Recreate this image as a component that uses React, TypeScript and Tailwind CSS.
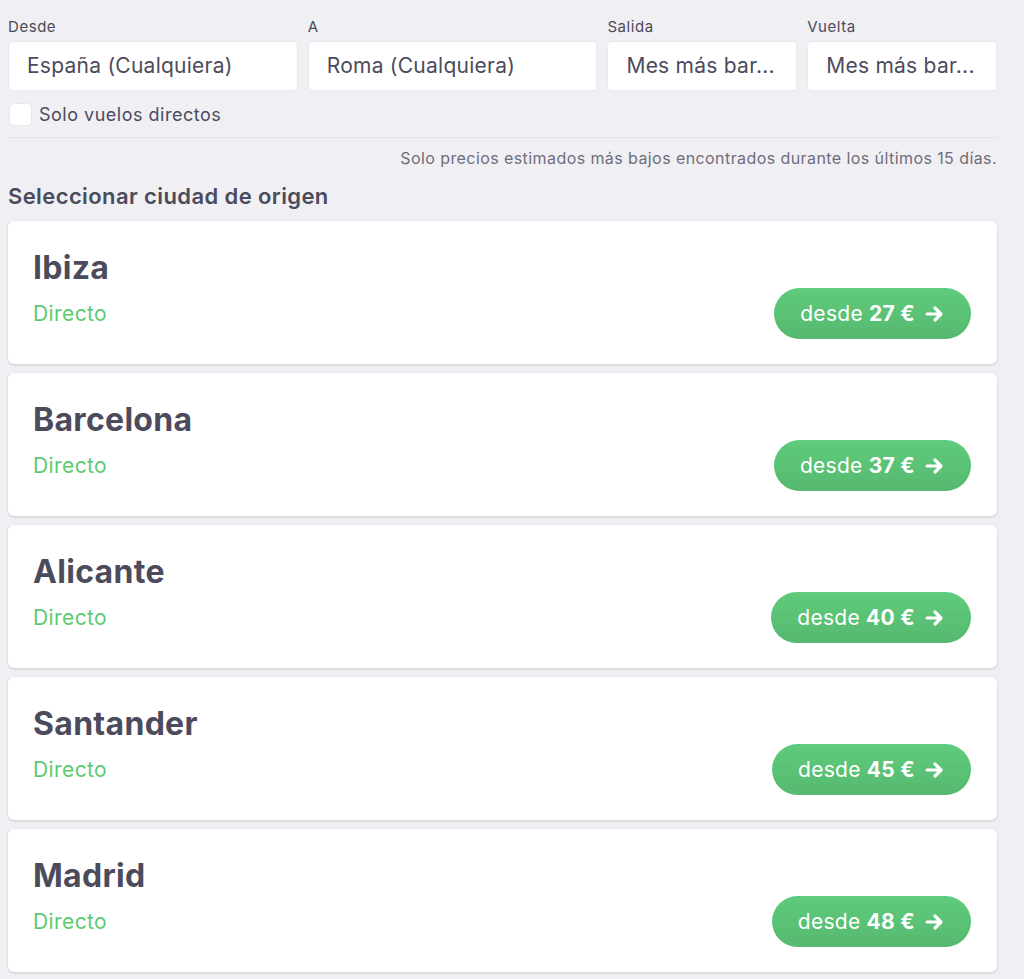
import React from "react";

const cities = [
  { name: "Ibiza", price: 27 },
  { name: "Barcelona", price: 37 },
  { name: "Alicante", price: 40 },
  { name: "Santander", price: 45 },
  { name: "Madrid", price: 48 },
];

function Arrow() {
  return (
    <svg width="20" height="18" viewBox="0 0 20 18" fill="none" className="ml-[10px]">
      <path d="M2 9h14M10 3l6 6-6 6" stroke="white" strokeWidth="3.2" strokeLinecap="round" strokeLinejoin="round" />
    </svg>
  );
}

function Field({ label, value, w }: { label: string; value: string; w: string }) {
  return (
    <div className={`flex flex-col ${w}`}>
      <div className="text-[15px] tracking-[0.55px] leading-[18px] text-[#4a4a58] mb-[5px]">{label}</div>
      <div className="h-[50px] bg-white rounded-[4px] border border-[#e8e8ee] flex items-center pl-[18px] text-[21px] tracking-[0.25px] text-[#4b4b5c] whitespace-nowrap overflow-hidden">
        {value}
      </div>
    </div>
  );
}

export default function App() {
  return (
    <div
      className="min-h-[979px] bg-[#f0f0f4] pl-[8px] pr-[27px] pt-[18px]"
      style={{ fontFamily: "Inter, 'Noto Sans', sans-serif" }}
    >
      <div className="flex gap-[10px]">
        <Field label="Desde" value="España (Cualquiera)" w="w-[290px]" />
        <Field label="A" value="Roma (Cualquiera)" w="w-[290px]" />
        <Field label="Salida" value="Mes más bar..." w="w-[190px]" />
        <Field label="Vuelta" value="Mes más bar..." w="w-[190px]" />
      </div>
      <div className="flex items-center mt-[11px] h-[24px]">
        <div className="w-[23px] h-[23px] bg-white rounded-[5px] border border-[#e6e6ec] ml-[1px]" />
        <span className="ml-[7px] text-[18px] tracking-[0.5px] text-[#4b4b5c]">Solo vuelos directos</span>
      </div>
      <div className="h-px bg-[#e2e2e8] mt-[11px]" />
      <div className="text-right text-[16px] tracking-[0.42px] text-[#6e6e7a] mt-[11px] leading-[18px]">
        Solo precios estimados más bajos encontrados durante los últimos 15 días.
      </div>
      <div className="text-[22px] font-semibold tracking-[0.4px] text-[#4b4b5c] mt-[17px] leading-[24px]">
        Seleccionar ciudad de origen
      </div>
      <div className="flex flex-col gap-[9px] mt-[13px]">
        {cities.map((c) => (
          <div
            key={c.name}
            className="bg-white rounded-[6px] shadow-[0_1px_3px_rgba(0,0,0,0.16)] pt-[29px] pb-[25px] pl-[25px] pr-[26px]"
          >
            <div className="text-[32px] font-bold tracking-[0.3px] text-[#4b4b5c] leading-[36px]">{c.name}</div>
            <div className="flex items-center justify-between mt-[2px]">
              <span className="text-[21px] tracking-[0.4px] text-[#5ccb6f]">Directo</span>
              <div className="h-[51px] rounded-full bg-gradient-to-b from-[#5fcb7c] to-[#56b96f] flex items-center px-[26px] text-white text-[21px] tracking-[0.3px]">
                <span>desde</span>
                <span className="font-bold ml-[6px]">{c.price} €</span>
                <Arrow />
              </div>
            </div>
          </div>
        ))}
      </div>
    </div>
  );
}
